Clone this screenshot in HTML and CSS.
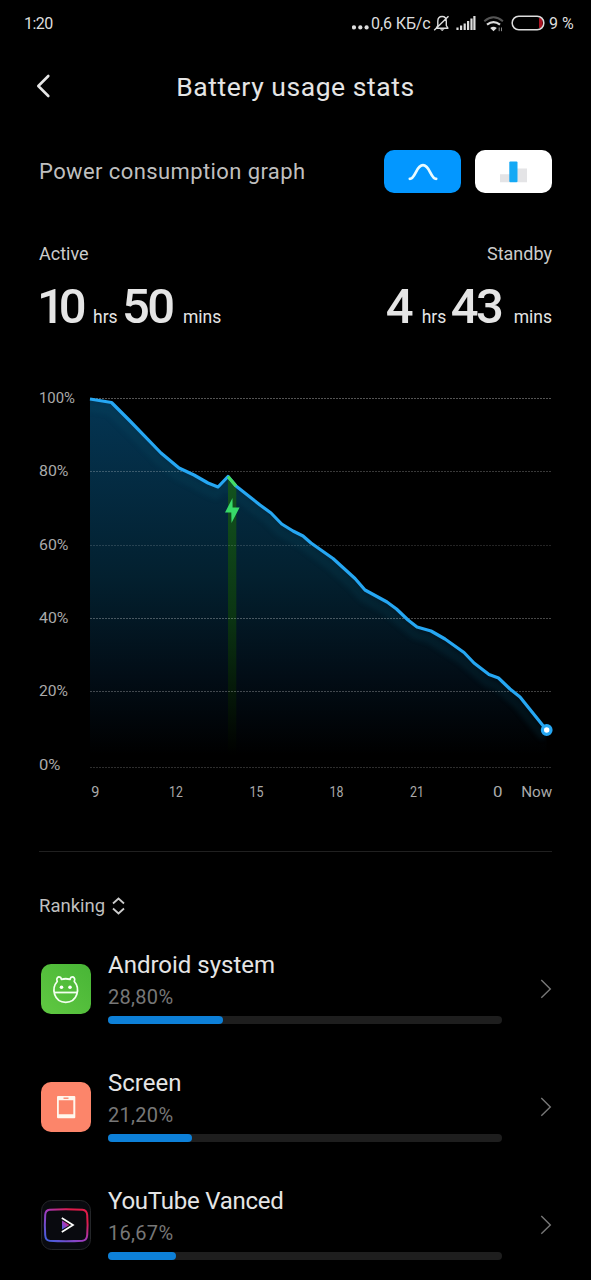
FILE: index.html
```html
<!DOCTYPE html>
<html lang="en">
<head>
<meta charset="utf-8">
<title>Battery usage stats</title>
<link rel="stylesheet" href="styles.css">
</head>
<body>
<div class="screen">
  <div class="status">
    <span class="clock">1:20</span>
    <div class="tray">
      <svg class="dots" width="17" height="24" viewBox="0 0 17 24" fill="#ddd"><circle cx="2" cy="16.400" r="2.100"/><circle cx="8.300" cy="16.400" r="2.100"/><circle cx="14.600" cy="16.400" r="2.100"/></svg>
      <span class="rate">0,6 КБ/с</span>
      <svg class="sys" width="114" height="24" viewBox="433 11 114 24" fill="none" stroke="#ddd">
        <path d="M436.3 28.2h11.6l-1.6-2.7v-4.2c0-3.2-1.7-4.8-4.2-4.8s-4.3 1.8-4.3 4.8v4.2z M434.2 30.3 448.5 16.2" stroke-width="1.4" stroke-linejoin="round"/>
        <path d="M439.9 29.2h4.600l-2.300 1.900z" fill="#ddd" stroke="none"/>
        <g stroke-width="2.2"><path d="M457.5 30v-2.5M461.1 30v-4.5M464.7 30v-6.5M468.1 30v-9M471.5 30V18.5M474.4 30V16"/></g>
        <path d="M484.3 21.2q9.2-7.8 18.6 0" stroke="#555" stroke-width="2"/>
        <path d="M487 24.7q6.5-5.2 13 0" stroke-width="2.2"/>
        <path d="M490.2 28q3.3-2.6 6.6 0l-3.3 3.2z" fill="#ddd" stroke="none"/>
        <path d="M499.2 27.5v3.7M501.5 27.5v3.7" stroke="#888" stroke-width="1"/>
        <path d="M539 18h1.7q2 0 2 5t-2 5H539z" fill="#aa1322" stroke="none"/>
        <rect x="512.2" y="16.2" width="31.6" height="13.6" rx="6.6" stroke-width="1.5"/>
      </svg>
      <span class="pct">9 %</span>
    </div>
  </div>
  <div class="header">
    <svg class="back" width="16" height="26" viewBox="0 0 16 26" fill="none" stroke="#e5e5e5" stroke-width="2.6" stroke-linecap="round" stroke-linejoin="round"><path d="M13.300 3 3.300 13l10 10"/></svg>
    <h1 class="title">Battery usage stats</h1>
  </div>
  <div class="mode">
    <span class="mode-label">Power consumption graph</span>
    <div class="toggles">
      <div class="toggle toggle-on"><svg width="30" height="18" viewBox="0 0 30 18" fill="none" stroke="#e9fbff" stroke-width="2.7" stroke-linecap="round"><path d="M1.8 15.8C7.5 15.8 8 2.2 15 2.2S22.5 15.8 28.2 15.8"/></svg></div>
      <div class="toggle"><svg width="27" height="22" viewBox="0 0 27 22"><path d="M0 13.3h10V21.300H0zM17 7.500h10V21.300H17z" fill="#e4e4e6"/><rect x="9.300" y="0.500" width="8.200" height="20.800" rx="1" fill="#14a9f5"/></svg></div>
    </div>
  </div>
  <div class="totals">
    <div class="total"><span class="caption">Active</span><div class="time"><b class="active-h">10</b><i class="hrs">hrs</i><b class="active-m">50</b><i>mins</i></div></div>
    <div class="total total-end"><span class="caption">Standby</span><div class="time"><b class="standby-h">4</b><i class="hrs">hrs</i><b class="standby-m">43</b><i>mins</i></div></div>
  </div>
  <svg class="chart" width="591" height="440" viewBox="0 380 591 440">
    <defs>
      <linearGradient id="area" gradientUnits="userSpaceOnUse" x1="0" y1="399" x2="0" y2="755"><stop offset="0" stop-color="#043553"/><stop offset=".5" stop-color="#03202f"/><stop offset=".78" stop-color="#020d16"/><stop offset="1" stop-color="#000"/></linearGradient>
      <linearGradient id="charge" gradientUnits="userSpaceOnUse" x1="0" y1="476" x2="0" y2="755"><stop offset="0" stop-color="#13541f"/><stop offset=".5" stop-color="#0b3513"/><stop offset="1" stop-color="#000"/></linearGradient>
      <clipPath id="under"><path d="M90 399 111.500 402.500 130 421 161 453 179 468 194 475 208 483 218 487 228 476.500 236 486 271 513 281.700 524 303 536 333 558.500 355 578.500 365 590 387 602 417 627 431 631 464 652.500 489 674.500 498.500 678 520 697 546.500 730V766H90z"/></clipPath>
      <filter id="soft" x="-10%" y="-10%" width="120%" height="120%"><feGaussianBlur stdDeviation="2.5"/></filter>
    </defs>
    <g clip-path="url(#under)">
      <rect x="90" y="390" width="462" height="376" fill="url(#area)"/>
      <path transform="translate(-2 8)" d="M90 399 111.500 402.500 130 421 161 453 179 468 194 475 208 483 218 487 228 476.500 236 486 271 513 281.700 524 303 536 333 558.500 355 578.500 365 590 387 602 417 627 431 631 464 652.500 489 674.500 498.500 678 520 697 546.500 730" fill="none" stroke="#0a5a70" stroke-width="9" opacity=".15" filter="url(#soft)"/>
      <rect x="228" y="470" width="8.300" height="290" fill="url(#charge)"/>
    </g>
    <g stroke="#fff" stroke-width="1" stroke-dasharray="2 1"><path d="M90 398.500H552" opacity=".33"/><path d="M90 471.500H552" opacity=".22"/><path d="M90 545.500H552" opacity=".14"/><path d="M90 618.500H552" opacity=".28"/><path d="M90 691.500H552" opacity=".25"/><path d="M90 767.500H552" opacity=".18"/></g>
    <path d="M90 399 111.500 402.500 121 412 130 421 161 453 179 468 194 475 208 483 218 487 228 476.500 236 486 260 505 271 513 281.700 524 293 531 303 536 311 543 333 558.500 355 578.500 365 590 387 602 396.500 609 408 620 417 627 431 631 445 639 464 652.500 474 663 489 674.500 498.500 678 510 689 520 697 528 707 546.500 730" fill="none" stroke="#26a7f3" stroke-width="3.200" stroke-linejoin="round"/>
    <path d="M228 476.500 236 486" stroke="#46dc62" stroke-width="3.200"/>
    <path d="M232.500 498 225 512.500h6.300L231.500 523 239.600 507.500h-7z" fill="#38d969"/>
    <circle cx="546.700" cy="730" r="4.300" fill="#fff" stroke="#26a7f3" stroke-width="3.200"/>
    <g class="axis">
      <text x="39" y="403" textLength="36" lengthAdjust="spacingAndGlyphs">100%</text><text x="39" y="476" textLength="29.500" lengthAdjust="spacingAndGlyphs">80%</text><text x="39" y="549.500" textLength="29.500" lengthAdjust="spacingAndGlyphs">60%</text><text x="39" y="623" textLength="29.500" lengthAdjust="spacingAndGlyphs">40%</text><text x="39" y="696" textLength="29" lengthAdjust="spacingAndGlyphs">20%</text><text x="39" y="769.500" textLength="21.500" lengthAdjust="spacingAndGlyphs">0%</text>
      <text x="91.300" y="796.500">9</text><text x="169" y="796.500" textLength="13.800" lengthAdjust="spacingAndGlyphs">12</text><text x="249.500" y="796.500" textLength="14" lengthAdjust="spacingAndGlyphs">15</text><text x="329.500" y="796.500" textLength="14" lengthAdjust="spacingAndGlyphs">18</text><text x="410" y="796.500" textLength="14" lengthAdjust="spacingAndGlyphs">21</text><text x="493" y="796.500" textLength="9.500" lengthAdjust="spacingAndGlyphs">0</text><text x="521.200" y="796.500" textLength="31" lengthAdjust="spacingAndGlyphs">Now</text>
    </g>
  </svg>
  <div class="divider"></div>
  <div class="ranking"><span>Ranking</span><svg width="13" height="18" viewBox="0 0 13 18" fill="none" stroke="#ccc" stroke-width="1.800"><path d="M1 6.500 6.500 1.500 12 6.500M1 11.500 6.500 16.500 12 11.500"/></svg></div>
  <div class="list">
    <div class="row">
      <svg class="icon" width="50" height="50" viewBox="0 0 50 50"><defs><linearGradient id="g" x1="0" y1="1" x2="1" y2="0"><stop stop-color="#60c842"/><stop offset="1" stop-color="#48b536"/></linearGradient></defs><rect width="50" height="50" rx="10" fill="url(#g)"/><g fill="none" stroke="#f3fff0" stroke-width="1.800" stroke-linejoin="round"><path d="M16.200 17.500C14.700 14.500 17 11.800 19.700 13.500L20.500 15.300Q24.700 14.200 29 15.300L29.800 13.500C32.500 11.800 34.800 14.500 33.300 17.500C39.500 24.500 36.500 38.300 24.700 38.300S10 24.500 16.200 17.500Z"/><path d="M13 28.500h23.500"/></g><circle cx="20.500" cy="23.200" r="1.800" fill="#fff"/><circle cx="29" cy="23.200" r="1.800" fill="#fff"/></svg>
      <div class="info"><div class="name">Android system</div><div class="share">28,80%</div><div class="bar"><div class="fill" style="width:115px"></div></div></div>
      <svg class="chev" width="12" height="20" viewBox="0 0 12 20"><path d="M1.300 1 10.300 10 1.300 18.700"/></svg>
    </div>
    <div class="row">
      <svg class="icon" width="50" height="50" viewBox="0 0 50 50"><rect width="50" height="50" rx="10" fill="#fc856a"/><path fill-rule="evenodd" d="M17 14h16.300q1 0 1 1v20.300q0 1-1 1H17q-1 0-1-1V15q0-1 1-1zM17.800 18.300V32.300H32.300V18.300z" fill="#fff7ed"/><path d="M22.500 16.200h5" stroke="#fc856a" stroke-width="1.400"/></svg>
      <div class="info"><div class="name">Screen</div><div class="share">21,20%</div><div class="bar"><div class="fill" style="width:83.500px"></div></div></div>
      <svg class="chev" width="12" height="20" viewBox="0 0 12 20"><path d="M1.300 1 10.300 10 1.300 18.700"/></svg>
    </div>
    <div class="row">
      <svg class="icon" width="50" height="50" viewBox="0 0 50 50"><defs><linearGradient id="v" x1="0" y1="1" x2="1" y2="0"><stop stop-color="#3c62e0"/><stop offset=".5" stop-color="#a33abb"/><stop offset=".8" stop-color="#e01b49"/></linearGradient></defs><rect x=".500" y=".500" width="49" height="49" rx="10" fill="#090a0f" stroke="#242629"/><path d="M8.500 9.700Q25 8.700 41.500 9.700Q45.800 10.200 46.200 15Q47 25 46.200 35Q45.800 40.300 41.500 40.800Q25 41.800 8.500 40.800Q4.500 40.300 4.200 35Q3.500 25 4.200 15Q4.500 10.200 8.500 9.700Z" fill="none" stroke="url(#v)" stroke-width="2"/><path d="M21 20.500 28.500 25 21 29.500z" fill="url(#v)"/><path d="M20.800 18 32 25 20.800 32" fill="none" stroke="#fff" stroke-width="1.700"/></svg>
      <div class="info"><div class="name name-tight">YouTube Vanced</div><div class="share">16,67%</div><div class="bar"><div class="fill" style="width:67.500px"></div></div></div>
      <svg class="chev" width="12" height="20" viewBox="0 0 12 20"><path d="M1.300 1 10.300 10 1.300 18.700"/></svg>
    </div>
  </div>
</div>
</body>
</html>
```

FILE: styles.css
```css
* { box-sizing: border-box; }
body { margin: 0; background: #000; }
.screen { width: 591px; height: 1280px; overflow: hidden; background: #000; color: #e5e5e5; font-family: Roboto, "Noto Sans", sans-serif; display: flex; flex-direction: column; }
.screen > * { flex-shrink: 0; }
svg { display: block; flex-shrink: 0; }
.status { height: 46px; display: flex; justify-content: space-between; padding: 11px 17px 0 24px; font-size: 16px; line-height: 25px; color: #ddd; }
.clock { letter-spacing: -0.5px; }
.tray { display: flex; white-space: nowrap; }
.dots { margin-right: 2px; }
.rate { width: 62px; letter-spacing: -0.1px; }
.pct { width: 25px; margin-left: 2px; }
.header { height: 82px; display: flex; align-items: center; padding: 0 35px; }
.back { margin-top: -2px; }
.title { flex: 1; margin: 0 16px 0 0; font-size: 26.5px; font-weight: 400; line-height: 40px; letter-spacing: 0.55px; text-align: center; }
.mode { height: 108px; display: flex; justify-content: space-between; align-items: flex-start; padding: 22px 39px 0; }
.mode-label { font-size: 22px; line-height: 43px; letter-spacing: 0.4px; color: #bfbfbf; }
.toggles { display: flex; gap: 14px; }
.toggle { width: 77px; height: 43px; border-radius: 10px; background: #fff; display: flex; align-items: center; justify-content: center; }
.toggle-on { background: #0397ff; }
.totals { height: 144px; display: flex; justify-content: space-between; padding: 6px 39px 0; }
.total { display: flex; flex-direction: column; }
.total-end { align-items: flex-end; }
.caption { font-size: 18px; line-height: 24px; color: #ccc; }
.time { display: flex; align-items: baseline; margin-top: 12px; line-height: 58px; white-space: nowrap; }
.time b { font-size: 49px; font-weight: 500; letter-spacing: -2.5px; }
.time .active-h { width: 54px; letter-spacing: -6px; text-indent: -2px; }
.time .active-m { width: 61px; }
.time .standby-h { width: 36px; }
.time .standby-m { width: 63px; }
.time i { font-size: 17.5px; font-style: normal; line-height: 1; }
.time .hrs { width: 29px; }
.axis { fill: #aaa; font-size: 14.5px; }
.divider { height: 1px; margin: 31px 39px 0; background: #202020; }
.ranking { height: 101px; padding: 42px 39px 0; display: flex; align-items: flex-start; gap: 7px; font-size: 18.5px; line-height: 24px; color: #bfbfbf; }
.ranking svg { margin-top: 3px; }
.row { height: 118px; padding: 0 39px 0 41px; display: flex; }
.icon { margin-top: 11px; }
.info { width: 395px; margin-left: 17px; }
.name { font-size: 24px; line-height: 25px; white-space: nowrap; }
.name-tight { letter-spacing: -0.25px; }
.share { margin-top: 7px; font-size: 20px; line-height: 24px; letter-spacing: 0.3px; color: #777; }
.bar { margin-top: 7px; height: 8px; border-radius: 4px; background: #1e1e1e; }
.fill { height: 8px; border-radius: 4px; background: #0d80d8; }
.chev { margin: 26px 0 0 38px; fill: none; stroke: #777; stroke-width: 1.4; }
```
